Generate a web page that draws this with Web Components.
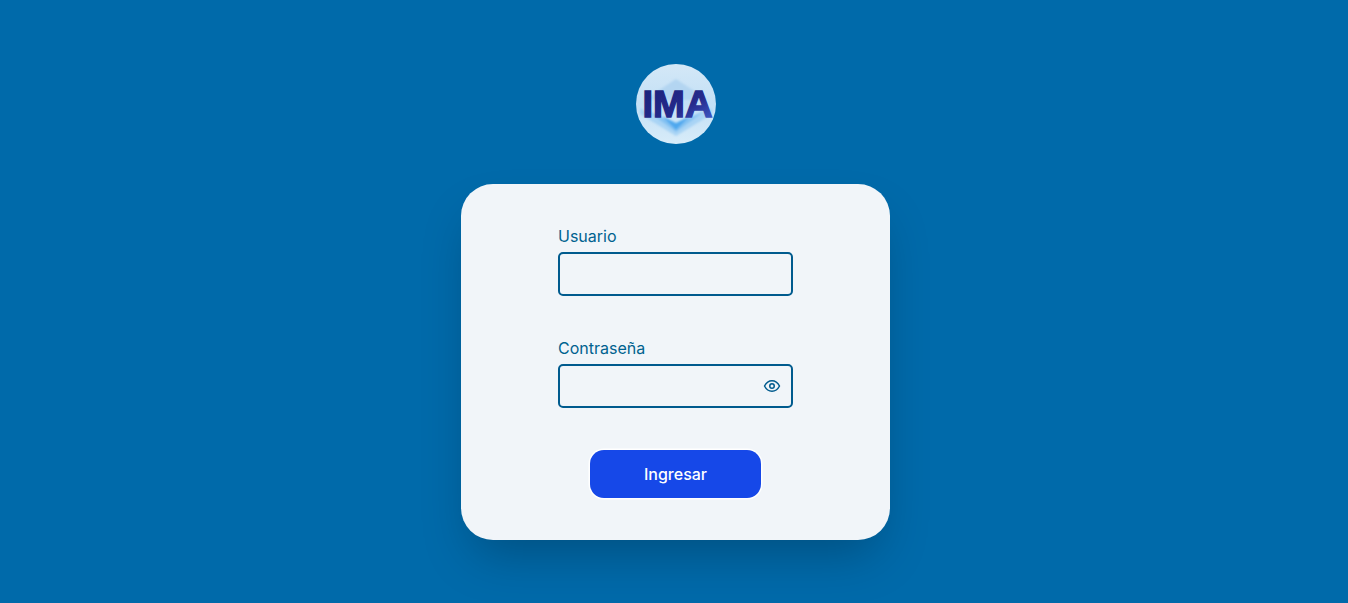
<!DOCTYPE html>
<html lang="es">
<head>
<meta charset="utf-8">
<title>IMA</title>
<style>
  html, body { margin: 0; height: 100%; }
  body { background: #006aaa; font-family: 'Inter', sans-serif; overflow: hidden; }
</style>
</head>
<body>
<login-page>
  <ima-logo></ima-logo>
  <login-card>
    <form-field label="Usuario"></form-field>
    <form-field label="Contraseña" type="password"></form-field>
    <submit-button>Ingresar</submit-button>
  </login-card>
</login-page>

<script>
class LoginPage extends HTMLElement {
  constructor() {
    super();
    this.attachShadow({ mode: 'open' });
    this.shadowRoot.innerHTML = `
      <style>
      :host {
        display: flex;
        flex-direction: column;
        align-items: center;
        gap: 40px;
        padding: 64px 0 0 3px;
        box-sizing: border-box;
        height: 603px;
      }
      </style>
      <slot></slot>
    `;
  }
}

class ImaLogo extends HTMLElement {
  constructor() {
    super();
    this.attachShadow({ mode: 'open' });
    this.shadowRoot.innerHTML = `
      <style>
      :host { display: block; width: 80px; height: 80px; }
      svg { display: block; }
      text { font-family: 'Liberation Sans', sans-serif; font-weight: 700; font-size: 36px; }
      </style>
      <svg width="80" height="80" viewBox="0 0 80 80">
        <defs>
          <linearGradient id="bg" x1="0" y1="0" x2="0" y2="1">
            <stop offset="0" stop-color="#d4e8f7"/>
            <stop offset=".5" stop-color="#c3e0f6"/>
            <stop offset="1" stop-color="#d8ecf9"/>
          </linearGradient>
          <linearGradient id="ima" x1="0" y1="0" x2="1" y2="1">
            <stop offset="0" stop-color="#1a2179"/>
            <stop offset=".6" stop-color="#252a8c"/>
            <stop offset="1" stop-color="#4263d2"/>
          </linearGradient>
          <filter id="soft"><feGaussianBlur stdDeviation="1"/></filter>
          <clipPath id="round"><circle cx="40" cy="40" r="40"/></clipPath>
        </defs>
        <g clip-path="url(#round)">
          <rect width="80" height="80" fill="url(#bg)"/>
          <g filter="url(#soft)">
            <path d="M40 15 L72 36 L8 36Z" fill="#b3d5f1"/>
            <path d="M4 44 L40 64 L76 44 L76 50 L40 72 L4 50Z" fill="#a9d4f5"/>
            <path d="M10 46 L40 60 L70 46 L40 68Z" fill="#84c2f2"/>
            <path d="M26 52 L40 59 L54 52 L40 66Z" fill="#4fa8ee"/>
          </g>
        </g>
        <text x="41.5" y="53" text-anchor="middle" textLength="70" lengthAdjust="spacingAndGlyphs" fill="url(#ima)" stroke="url(#ima)" stroke-width="1.3">IMA</text>
      </svg>
    `;
  }
}

class LoginCard extends HTMLElement {
  constructor() {
    super();
    this.attachShadow({ mode: 'open' });
    this.shadowRoot.innerHTML = `
      <style>
      :host {
        display: flex;
        flex-direction: column;
        align-items: center;
        width: 429px;
        height: 356px;
        box-sizing: border-box;
        padding-top: 42px;
        background: #f1f5f9;
        border-radius: 32px;
        box-shadow: 0 25px 50px -12px rgba(0, 0, 0, .25);
      }
      </style>
      <slot></slot>
    `;
  }
}

class FormField extends HTMLElement {
  constructor() {
    super();
    this.attachShadow({ mode: 'open' });
    const isPassword = this.getAttribute('type') === 'password';
    this.shadowRoot.innerHTML = `
      <style>
      :host {
        display: block;
        width: 235px;
        margin-bottom: 42px;
        color: #00628f;
      }
      label { display: block; font-size: 16px; line-height: 20px; margin-bottom: 6px; }
      .box {
        display: flex;
        align-items: center;
        height: 44px;
        box-sizing: border-box;
        border: 2px solid #005b8e;
        border-radius: 5px;
        padding: 0 10px 0 8px;
      }
      input {
        flex: 1;
        min-width: 0;
        border: 0;
        outline: 0;
        background: transparent;
        font: inherit;
        color: inherit;
      }
      svg { display: block; flex: none; }
      </style>
      <label></label>
      <div class="box">
        <input type="${isPassword ? 'password' : 'text'}">
        ${isPassword ? `
        <svg width="18" height="18" viewBox="0 0 24 24" fill="none" stroke="#005b8e" stroke-width="2" stroke-linecap="round" stroke-linejoin="round">
          <path d="M2 12s3.6-7 10-7 10 7 10 7-3.6 7-10 7-10-7-10-7Z"/>
          <circle cx="12" cy="12" r="3"/>
        </svg>` : ''}
      </div>
    `;
    this.shadowRoot.querySelector('label').innerText = this.getAttribute('label');
  }
}

class SubmitButton extends HTMLElement {
  constructor() {
    super();
    this.attachShadow({ mode: 'open' });
    this.shadowRoot.innerHTML = `
      <style>
      :host { display: block; }
      button {
        display: block;
        width: 171px;
        height: 48px;
        background: #1648e8;
        color: #fff;
        border: 0;
        border-radius: 14px;
        box-shadow: 0 0 0 1.5px #fff;
        font: 450 16px 'Inter', sans-serif;
        cursor: pointer;
      }
      </style>
      <button type="submit"><slot></slot></button>
    `;
  }
}

window.customElements.define('login-page', LoginPage);
window.customElements.define('ima-logo', ImaLogo);
window.customElements.define('login-card', LoginCard);
window.customElements.define('form-field', FormField);
window.customElements.define('submit-button', SubmitButton);
</script>
</body>
</html>
